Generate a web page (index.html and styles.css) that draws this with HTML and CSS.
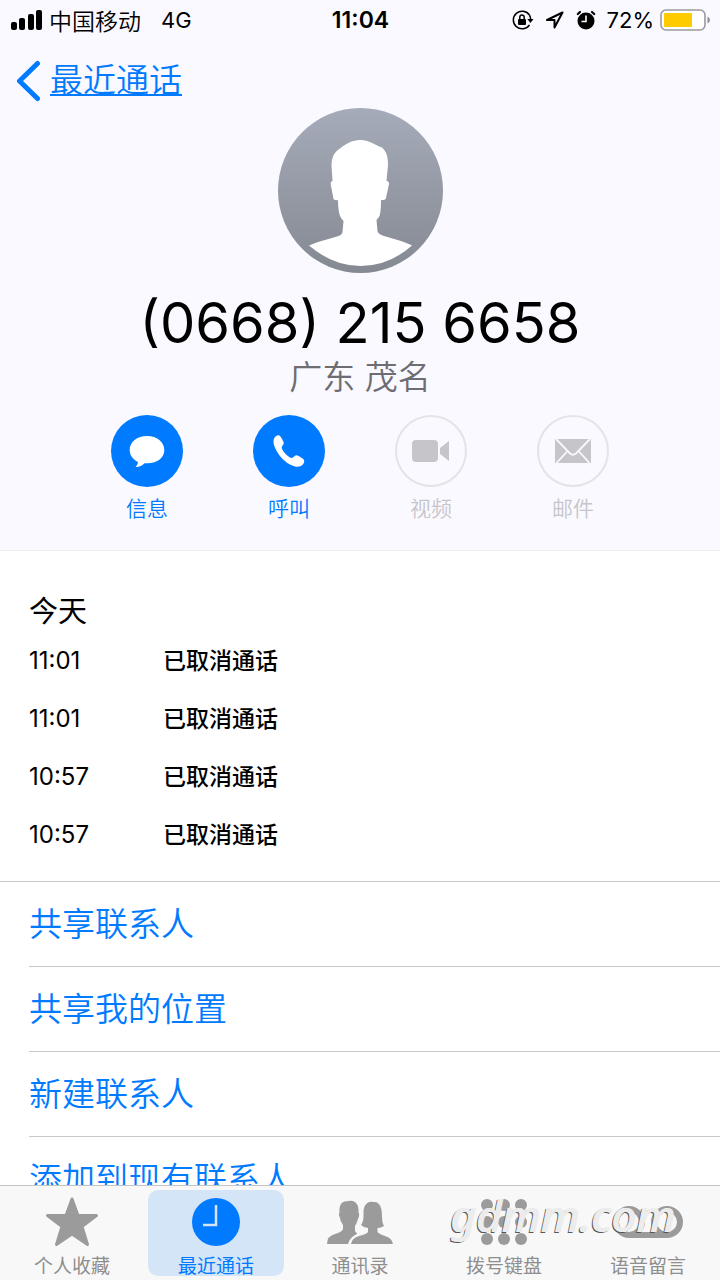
FILE: index.html
```
<!DOCTYPE html>
<html lang="zh-CN">
<head>
    <meta charset="UTF-8">
    <meta name="viewport" content="width=device-width, initial-scale=1.0">
    <title>最近通话</title>
    <link rel="stylesheet" href="styles.css">
</head>
<body>
    <main class="content">
        <header class="contact-header">
            <div class="status-bar">
                <div class="status-left">
                    <svg class="signal" width="32" height="20" viewBox="0 0 32 20">
                        <rect x="0" y="12" width="6" height="8" rx="2"/>
                        <rect x="8" y="8" width="6" height="12" rx="2"/>
                        <rect x="17" y="4" width="6" height="16" rx="2"/>
                        <rect x="25" y="0" width="6" height="20" rx="2"/>
                    </svg>
                    <span class="carrier">中国移动</span>
                    <span>4G</span>
                </div>
                <span class="clock">11:04</span>
                <div class="status-right">
                    <svg width="22" height="20" viewBox="0 0 22 20" fill="none" stroke="#000" stroke-width="1.5">
                        <path d="M17.5 5.2A8.8 8.8 0 1 0 17.5 14.8"/>
                        <path d="M17.5 5.2q1.2 2 1.1 4.5"/>
                        <path d="M15.3 9h6.2l-3.1 4z" fill="#000" stroke="none"/>
                        <rect x="6" y="9" width="8" height="6" rx="1" fill="#000" stroke="none"/>
                        <path d="M7.8 9V7.2a2.2 2.2 0 0 1 4.4 0V9"/>
                    </svg>
                    <svg width="20" height="20" viewBox="0 0 20 20" fill="none" stroke="#000" stroke-width="2" stroke-linejoin="round">
                        <path d="M17.5 2.5L2 10h7.5v7.5z"/>
                    </svg>
                    <svg width="20" height="20" viewBox="0 0 20 20">
                        <circle cx="10" cy="11" r="8.5"/>
                        <path d="M1.8 4L4 2M18.200 4L16 2" stroke="#000" stroke-width="2.2" stroke-linecap="round"/>
                        <path d="M10 5.5V11.5H5.5" fill="none" stroke="#fff" stroke-width="1.6"/>
                    </svg>
                    <span>72%</span>
                    <svg width="50" height="22" viewBox="0 0 50 22">
                        <rect x="1" y="1" width="44" height="20" rx="5" fill="#fff" stroke="#9a9a9e" stroke-width="1.6"/>
                        <rect x="4" y="4" width="28" height="14" rx="1" fill="#fecb00"/>
                        <path d="M47.5 7.5q2.5 1.2 2.5 3.5t-2.5 3.5z" fill="#8e8e93"/>
                    </svg>
                </div>
            </div>

            <nav class="back-nav">
                <a href="#" class="back-link">
                    <svg width="25" height="42" viewBox="0 0 25 42" fill="none" stroke="#007aff" stroke-width="5" stroke-linecap="round" stroke-linejoin="round">
                        <path d="M21.5 3.5L3.5 21L21.5 38.5"/>
                    </svg>
                    <span>最近通话</span>
                </a>
            </nav>

            <svg class="avatar" viewBox="0 0 165 165">
                <defs>
                    <linearGradient id="avatar-bg" x1="0" y1="0" x2="0" y2="1">
                        <stop offset="0" stop-color="#a5abb9"/>
                        <stop offset="1" stop-color="#858992"/>
                    </linearGradient>
                </defs>
                <circle cx="82.5" cy="82.5" r="82.5" fill="url(#avatar-bg)"/>
                <path fill="#fff" d="M83 32C76 32 70 34 62 40.500C56 44 54 49 53.500 57L54.500 73Q52 73 53 78L55.500 91Q56 92.500 60 92Q60 105 63 110L65.500 113L64.500 124Q64 127 59 128.500L40 134Q34 136 31 137.500Q55 158 82.500 158Q111 158 134 137.500Q132 136 123 133L106 128Q100 126 99.500 123L98.500 112L101 109Q103 106 103 92Q107.500 92.500 108 90L111 76Q111 73 108.500 73L110 57C110 50 109 44 104 39.500C99 38 91 32 83 32Z"/>
            </svg>
            <h1 class="phone-number">(0668) 215 6658</h1>
            <p class="location">广东 茂名</p>

            <div class="actions">
                <button class="action">
                    <span class="action-circle">
                        <svg width="36" height="34" viewBox="0 0 36 34" fill="#fff">
                            <path d="M18 2C8 2 .7 8 .7 16c0 5.200 3.200 9.500 8.300 12-.3 2-1 3.500-2.500 5 4 0 7-1.500 9-3.800 12 1.200 19.800-5.200 19.800-13.200C35.300 8 28 2 18 2z"/>
                        </svg>
                    </span>
                    <span>信息</span>
                </button>
                <button class="action">
                    <span class="action-circle">
                        <svg width="36" height="36" viewBox="0 0 36 36" fill="#fff">
                            <path d="M4 4Q6 1.500 8.500 2.500Q10 3.500 12.500 9Q13.500 11 11.500 12.500Q10 14 11 16Q13.500 21 19 24.500Q21 25.500 22.500 24Q24.500 21.500 26.500 22.500Q32 25 33 27Q34 29 32 31.500Q29 34.500 24 33.500Q15 31 8.500 22.500Q2 13.500 2.500 7.500Q2.800 5.200 4 4Z"/>
                        </svg>
                    </span>
                    <span>呼叫</span>
                </button>
                <button class="action" disabled>
                    <span class="action-circle">
                        <svg width="38" height="24" viewBox="0 0 38 24" fill="#c5c5ca">
                            <rect x="0" y="1" width="26" height="22" rx="4"/>
                            <path d="M28 9L37 2V22L28 15z"/>
                        </svg>
                    </span>
                    <span>视频</span>
                </button>
                <button class="action" disabled>
                    <span class="action-circle">
                        <svg width="36" height="24" viewBox="0 0 36 24">
                            <rect width="36" height="24" fill="#c5c5ca"/>
                            <path d="M1 0L15 14.500Q18 17 21 14.500L35 0M12.500 12L1.500 24M23.500 12L34.500 24" fill="none" stroke="#faf9ff" stroke-width="1.800"/>
                        </svg>
                    </span>
                    <span>邮件</span>
                </button>
            </div>
        </header>

        <section class="call-log">
            <h2>今天</h2>
            <table>
                <tr><td class="call-time">11:01</td><td>已取消通话</td></tr>
                <tr><td class="call-time">11:01</td><td>已取消通话</td></tr>
                <tr><td class="call-time">10:57</td><td>已取消通话</td></tr>
                <tr><td class="call-time">10:57</td><td>已取消通话</td></tr>
            </table>
        </section>

        <ul class="options">
            <li><a href="#">共享联系人</a></li>
            <li><a href="#">共享我的位置</a></li>
            <li><a href="#">新建联系人</a></li>
            <li><a href="#">添加到现有联系人</a></li>
        </ul>
    </main>

    <nav class="tab-bar">
        <a href="#" class="tab">
            <svg width="54" height="50" viewBox="0 0 54 50" fill="#9b9b9b" stroke="#9b9b9b" stroke-width="3" stroke-linejoin="round">
                <path d="M27 2L33 18.500H51.500L37 29.500L42.500 47.500L27 37L11.500 47.500L17 29.500L2.500 18.500H21z"/>
            </svg>
            <span>个人收藏</span>
        </a>
        <a href="#" class="tab active">
            <svg width="50" height="50" viewBox="0 0 50 50">
                <circle cx="25" cy="25" r="24" fill="#007aff"/>
                <path d="M25 8V28H12" fill="none" stroke="#d4e5f8" stroke-width="2.500"/>
            </svg>
            <span>最近通话</span>
        </a>
        <a href="#" class="tab">
            <svg width="66" height="50" viewBox="0 0 66 50" fill="#9b9b9b">
                <path d="M22 4C28 3 32 7 31.500 15Q33 18 31 22Q29.500 27 28 29V34Q30 36 30 37Q23 40 21 47H0Q0 39 8 37Q15 35 16 32V28Q13 24 13 21Q11 18 12.500 15C12 7 15 4 22 4z"/>
                <path d="M46 5C54 4 55 13 55 19Q55 26 57 29Q54 31 50.500 31V35Q52 37 58 39Q65 41 66 47H24Q25 41 32 39Q40 37 41 35V31Q37 31 34 28Q37 24 36.500 17C36 9 40 4 46 5z"/>
            </svg>
            <span>通讯录</span>
        </a>
        <a href="#" class="tab">
            <svg width="48" height="50" viewBox="0 0 48 50" fill="#9b9b9b">
                <circle cx="7" cy="8" r="6"/><circle cx="24" cy="8" r="6"/><circle cx="41" cy="8" r="6"/>
                <circle cx="7" cy="25" r="6"/><circle cx="24" cy="25" r="6"/><circle cx="41" cy="25" r="6"/>
                <circle cx="7" cy="42" r="6"/><circle cx="24" cy="42" r="6"/><circle cx="41" cy="42" r="6"/>
            </svg>
            <span>拨号键盘</span>
        </a>
        <a href="#" class="tab">
            <svg width="74" height="50" viewBox="0 0 74 50" fill="none" stroke="#9b9b9b" stroke-width="6">
                <circle cx="18" cy="25" r="13"/>
                <circle cx="56" cy="25" r="13"/>
                <path d="M18 38H56"/>
            </svg>
            <span>语音留言</span>
        </a>
        <span class="watermark">gdmm.com</span>
    </nav>
</body>
</html>
```
FILE: styles.css
```
* {
    box-sizing: border-box;
}
body {
    margin: 0;
    height: 100vh;
    display: flex;
    flex-direction: column;
    font-family: Inter, "Noto Sans CJK SC", sans-serif;
    color: #000;
    background-color: #fff;
}
svg {
    display: block;
    flex-shrink: 0;
}
a {
    color: #007aff;
    text-decoration: none;
}
.content {
    flex: 1;
    min-height: 0;
    overflow: hidden;
}

/* Header */
.contact-header {
    display: flex;
    flex-direction: column;
    align-items: center;
    padding-bottom: 27px;
    background-color: #faf9ff;
    border-bottom: 1px solid #ededf0;
}
.status-bar {
    width: 100%;
    height: 40px;
    padding: 0 10px 0 11px;
    display: grid;
    grid-template-columns: 1fr auto 1fr;
    align-items: center;
    font-size: 22px;
}
.status-left, .status-right {
    display: flex;
    align-items: center;
}
.status-left {
    gap: 6px;
}
.status-right {
    justify-content: flex-end;
    gap: 11px;
}
.status-right svg:last-child {
    margin-left: -5px;
}
.carrier {
    font-size: 23px;
    font-weight: 350;
    margin-right: 14px;
}
.clock {
    font-size: 23px;
    font-weight: 600;
}
.back-nav {
    width: 100%;
    padding: 14px 16px 0;
}
.back-link {
    display: inline-flex;
    align-items: center;
    gap: 9px;
    height: 54px;
    font-size: 33px;
    font-weight: 350;
    line-height: 40px;
}
.back-link span {
    padding-bottom: 2px;
    text-decoration: underline;
    text-underline-offset: 2px;
    text-decoration-thickness: 2px;
}
.avatar {
    width: 165px;
    height: 165px;
}
.phone-number {
    margin: 15px 0 0;
    font-size: 56px;
    font-weight: 400;
    line-height: 70px;
}
.location {
    margin: 0;
    font-size: 33px;
    font-weight: 350;
    line-height: 38px;
    color: #6d6d72;
}
.actions {
    display: flex;
    gap: 70px;
    margin-top: 19px;
}
.action {
    display: flex;
    flex-direction: column;
    align-items: center;
    gap: 8px;
    padding: 0;
    border: none;
    background: none;
    font-family: inherit;
    font-size: 21px;
    font-weight: 350;
    line-height: 28px;
    color: #007aff;
    cursor: pointer;
}
.action-circle {
    width: 72px;
    height: 72px;
    border-radius: 50%;
    background-color: #007aff;
    display: flex;
    align-items: center;
    justify-content: center;
}
.action:disabled {
    color: #c5c5ca;
    cursor: default;
}
.action:disabled .action-circle {
    background: none;
    border: 2px solid #e3e3e8;
}

/* Call log */
.call-log {
    padding: 41px 29px 17px;
    border-bottom: 1px solid #c8c7cc;
}
.call-log h2 {
    margin: 0;
    font-size: 29px;
    font-weight: 400;
    line-height: 40px;
}
.call-log table {
    border-collapse: collapse;
    font-size: 23px;
    font-weight: 500;
    line-height: 28px;
}
.call-log td {
    height: 58px;
    padding: 0;
}
.call-log .call-time {
    width: 134px;
    font-size: 24px;
    font-weight: 400;
}

/* Options */
.options {
    margin: 0;
    padding: 0 0 0 29px;
    list-style: none;
}
.options a {
    display: block;
    border-bottom: 1px solid #c8c7cc;
    font-size: 33px;
    font-weight: 350;
    line-height: 84px;
}

/* Tab bar */
.tab-bar {
    position: relative;
    display: grid;
    grid-template-columns: repeat(5, 1fr);
    padding: 4px 0;
    background-color: #f8f8f8;
    border-top: 1px solid #c4c4c6;
}
.tab {
    display: flex;
    flex-direction: column;
    align-items: center;
    gap: 10px;
    margin: 0 4px;
    padding-top: 7px;
    border-radius: 10px;
    font-size: 19px;
    line-height: 19px;
    color: #8e8e8e;
}
.tab.active {
    background-color: #d4e5f8;
    color: #007aff;
}
.watermark {
    position: absolute;
    right: 45px;
    top: 0;
    font-family: "Noto Sans", sans-serif;
    font-size: 44px;
    font-style: italic;
    font-weight: 500;
    line-height: 58px;
    color: #ececec;
    text-shadow: 1px 0 0 #ececec, -1px 1px 0 #555;
    pointer-events: none;
}
```
